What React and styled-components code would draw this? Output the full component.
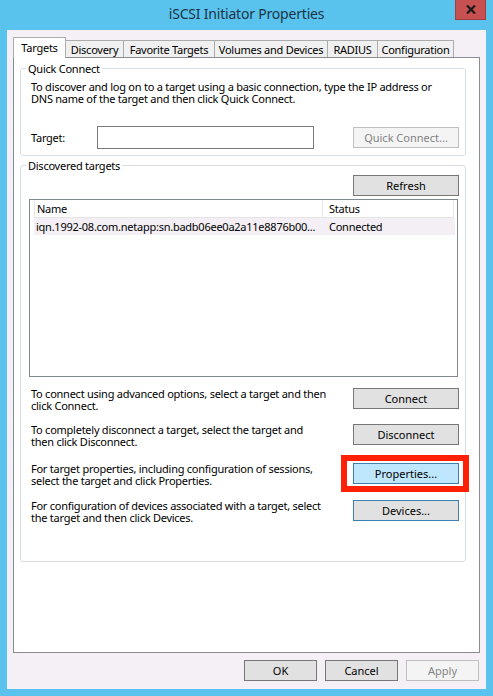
import React from 'react';
import styled, { createGlobalStyle, css } from 'styled-components';

const FONT = `"Noto Sans", "Open Sans", sans-serif`;

const GlobalStyle = createGlobalStyle`
  html, body { margin: 0; padding: 0; }
  body {
    background: #59c3ee;
    font-family: ${FONT};
    font-size: 11px;
    letter-spacing: -0.25px;
    color: #000;
  }
  *, *::before, *::after { box-sizing: border-box; }
`;

const Window = styled.div`
  width: 493px;
  height: 696px;
  background: #59c3ee;
  display: flex;
  flex-direction: column;
  padding: 0 7px 7px;
`;

const TitleBar = styled.div`
  flex: none;
  height: 30px;
  display: grid;
  grid-template-columns: 1fr auto 1fr;
  align-items: start;
`;

const Title = styled.div`
  grid-column: 2;
  font-size: 14px;
  letter-spacing: -0.2px;
  line-height: 20px;
  padding-top: 4px;
  color: #1c3346;
  white-space: nowrap;
`;

const CloseButton = styled.div`
  grid-column: 3;
  justify-self: end;
  width: 31px;
  height: 20px;
  background: #c75050;
  border: 1px solid #a43d3d;
  border-top: none;
  display: flex;
  align-items: center;
  justify-content: center;
`;

const Client = styled.div`
  flex: 1;
  background: #f4f0f5;
  display: flex;
  flex-direction: column;
  padding: 7px 6px 0;
`;

const TabStrip = styled.div`
  position: relative;
  z-index: 1;
  height: 20px;
  display: flex;
  align-items: flex-start;
`;

const Tab = styled.div`
  width: ${p => p.$w}px;
  height: 17px;
  margin-top: 3px;
  margin-left: -1px;
  background: #f0f0f0;
  border: 1px solid #acacac;
  border-bottom: none;
  display: flex;
  align-items: center;
  justify-content: center;
  white-space: nowrap;
  line-height: 15px;
  &:first-child { margin-left: 0; }
  ${p => p.$active && css`
    height: 21px;
    margin-top: 0;
    background: #fff;
    padding-bottom: 2px;
  `}
`;

const Panel = styled.div`
  height: 596px;
  background: #fff;
  border: 1px solid #898c95;
  padding: 3px 13px 0 6px;
  display: flex;
  flex-direction: column;
`;

const Group = styled.fieldset`
  margin: 0;
  padding: 0;
  min-width: 0;
  border: 1px solid #d5dfe5;
  border-radius: 3px;
  & + & { margin-top: 2px; }
`;

const Legend = styled.legend`
  margin-left: 5px;
  padding: 0 2px;
  line-height: 15px;
  color: #000;
`;

const GroupBody = styled.div`
  padding: ${p => p.$pad};
`;

const Paragraph = styled.div`
  line-height: 12px;
  white-space: nowrap;
  padding-left: ${p => p.$indent || 0}px;
  min-width: 0;
`;

const FieldRow = styled.div`
  display: flex;
  align-items: center;
  margin-top: 21px;
`;

const Label = styled.label`
  width: 66px;
`;

const TextInput = styled.div`
  width: 217px;
  height: 23px;
  border: 1px solid #7a7a7a;
  background: #fff;
`;

const Button = styled.button`
  font: inherit;
  width: ${p => p.$w || 106}px;
  height: 21px;
  padding: 0 0 1px;
  margin: 0;
  background: #e1e1e1;
  border: 1px solid #777;
  color: #000;
  line-height: 17px;
  flex: none;
  ${p => p.$variant === 'hot' && css`
    background: #bee6fd;
    border-color: #3c7fb1;
  `}
  ${p => p.$variant === 'focus' && css`
    border-color: #3c7fb1;
  `}
  ${p => p.$variant === 'disabled' && css`
    background: #f4f4f4;
    border-color: #bfbfbf;
    color: #838383;
  `}
`;

const PushRight = styled.div`
  margin-left: auto;
`;

const ToolRow = styled.div`
  display: flex;
  justify-content: flex-end;
`;

const ListBox = styled.div`
  margin-top: 3px;
  margin-right: 1px;
  height: 178px;
  border: 1px solid #828790;
  background: #fff;
  padding: 0 2px 0 4px;
`;

const ListRow = styled.div`
  display: grid;
  grid-template-columns: 289px 131px;
  height: ${p => (p.$header ? 18 : 17)}px;
  align-items: center;
  background: ${p => (p.$selected ? '#f3eff5' : 'transparent')};
`;

const Cell = styled.div`
  height: 100%;
  display: flex;
  align-items: center;
  padding-left: ${p => p.$pad}px;
  white-space: nowrap;
  overflow: hidden;
  ${p => p.$header && css`
    border-right: 1px solid #e5e5e5;
    border-bottom: 1px solid #e5e5e5;
    border-left: ${p.$first ? '1px solid #e5e5e5' : 'none'};
  `}
`;

const ActionRow = styled.div`
  display: flex;
  justify-content: space-between;
  align-items: flex-start;
  margin-top: ${p => p.$mt}px;
`;

const Annotated = styled.div`
  position: relative;
  flex: none;
  &::after {
    content: '';
    position: absolute;
    top: -8px;
    bottom: -8px;
    left: -12px;
    right: -10px;
    border: 6px solid #ff2106;
    pointer-events: none;
  }
`;

const DialogButtons = styled.div`
  display: flex;
  justify-content: flex-end;
  gap: 8px;
  margin-top: 7px;
  padding-right: 1px;
`;

const actions = [
  {
    mt: 11,
    text: ['To connect using advanced options, select a target and then', 'click Connect.'],
    label: 'Connect',
  },
  {
    mt: 12,
    text: ['To completely disconnect a target, select the target and', 'then click Disconnect.'],
    label: 'Disconnect',
  },
  {
    mt: 15,
    text: ['For target properties, including configuration of sessions,', 'select the target and click Properties.'],
    label: 'Properties...',
    variant: 'hot',
    annotate: true,
  },
  {
    mt: 13,
    text: ['For configuration of devices associated with a target, select', 'the target and then click Devices.'],
    label: 'Devices...',
    variant: 'focus',
  },
];

const tabs = [
  { label: 'Targets', w: 53, active: true },
  { label: 'Discovery', w: 59 },
  { label: 'Favorite Targets', w: 92 },
  { label: 'Volumes and Devices', w: 114 },
  { label: 'RADIUS', w: 51 },
  { label: 'Configuration', w: 77 },
];

export default function App() {
  return (
    <>
      <GlobalStyle />
      <Window>
        <TitleBar>
          <Title>iSCSI Initiator Properties</Title>
          <CloseButton>
            <svg width="10" height="9" viewBox="0 0 10 9">
              <path d="M1 0.5 L9 8.5 M9 0.5 L1 8.5" stroke="#1a1a1a" strokeWidth="2.2" />
            </svg>
          </CloseButton>
        </TitleBar>
        <Client>
          <TabStrip>
            {tabs.map(t => (
              <Tab key={t.label} $w={t.w} $active={t.active}>{t.label}</Tab>
            ))}
          </TabStrip>
          <Panel>
            <Group>
              <Legend>Quick Connect</Legend>
              <GroupBody $pad="5px 6px 6px 10px">
                <Paragraph>
                  To discover and log on to a target using a basic connection, type the IP address or
                  <br />
                  DNS name of the target and then click Quick Connect.
                </Paragraph>
                <FieldRow>
                  <Label>Target:</Label>
                  <TextInput />
                  <PushRight>
                    <Button $variant="disabled">Quick Connect...</Button>
                  </PushRight>
                </FieldRow>
              </GroupBody>
            </Group>
            <Group>
              <Legend>Discovered targets</Legend>
              <GroupBody $pad="2px 6px 37px 8px">
                <ToolRow>
                  <Button>Refresh</Button>
                </ToolRow>
                <ListBox>
                  <ListRow $header>
                    <Cell $header $first $pad={2}>Name</Cell>
                    <Cell $header $pad={6}>Status</Cell>
                  </ListRow>
                  <ListRow $selected>
                    <Cell $pad={2}>iqn.1992-08.com.netapp:sn.badb06ee0a2a11e8876b00...</Cell>
                    <Cell $pad={6}>Connected</Cell>
                  </ListRow>
                </ListBox>
                {actions.map(a => (
                  <ActionRow key={a.label} $mt={a.mt}>
                    <Paragraph $indent={2}>
                      {a.text[0]}
                      <br />
                      {a.text[1]}
                    </Paragraph>
                    {a.annotate ? (
                      <Annotated>
                        <Button $variant={a.variant}>{a.label}</Button>
                      </Annotated>
                    ) : (
                      <Button $variant={a.variant}>{a.label}</Button>
                    )}
                  </ActionRow>
                ))}
              </GroupBody>
            </Group>
          </Panel>
          <DialogButtons>
            <Button $w={73}>OK</Button>
            <Button $w={73}>Cancel</Button>
            <Button $w={73} $variant="disabled">Apply</Button>
          </DialogButtons>
        </Client>
      </Window>
    </>
  );
}
